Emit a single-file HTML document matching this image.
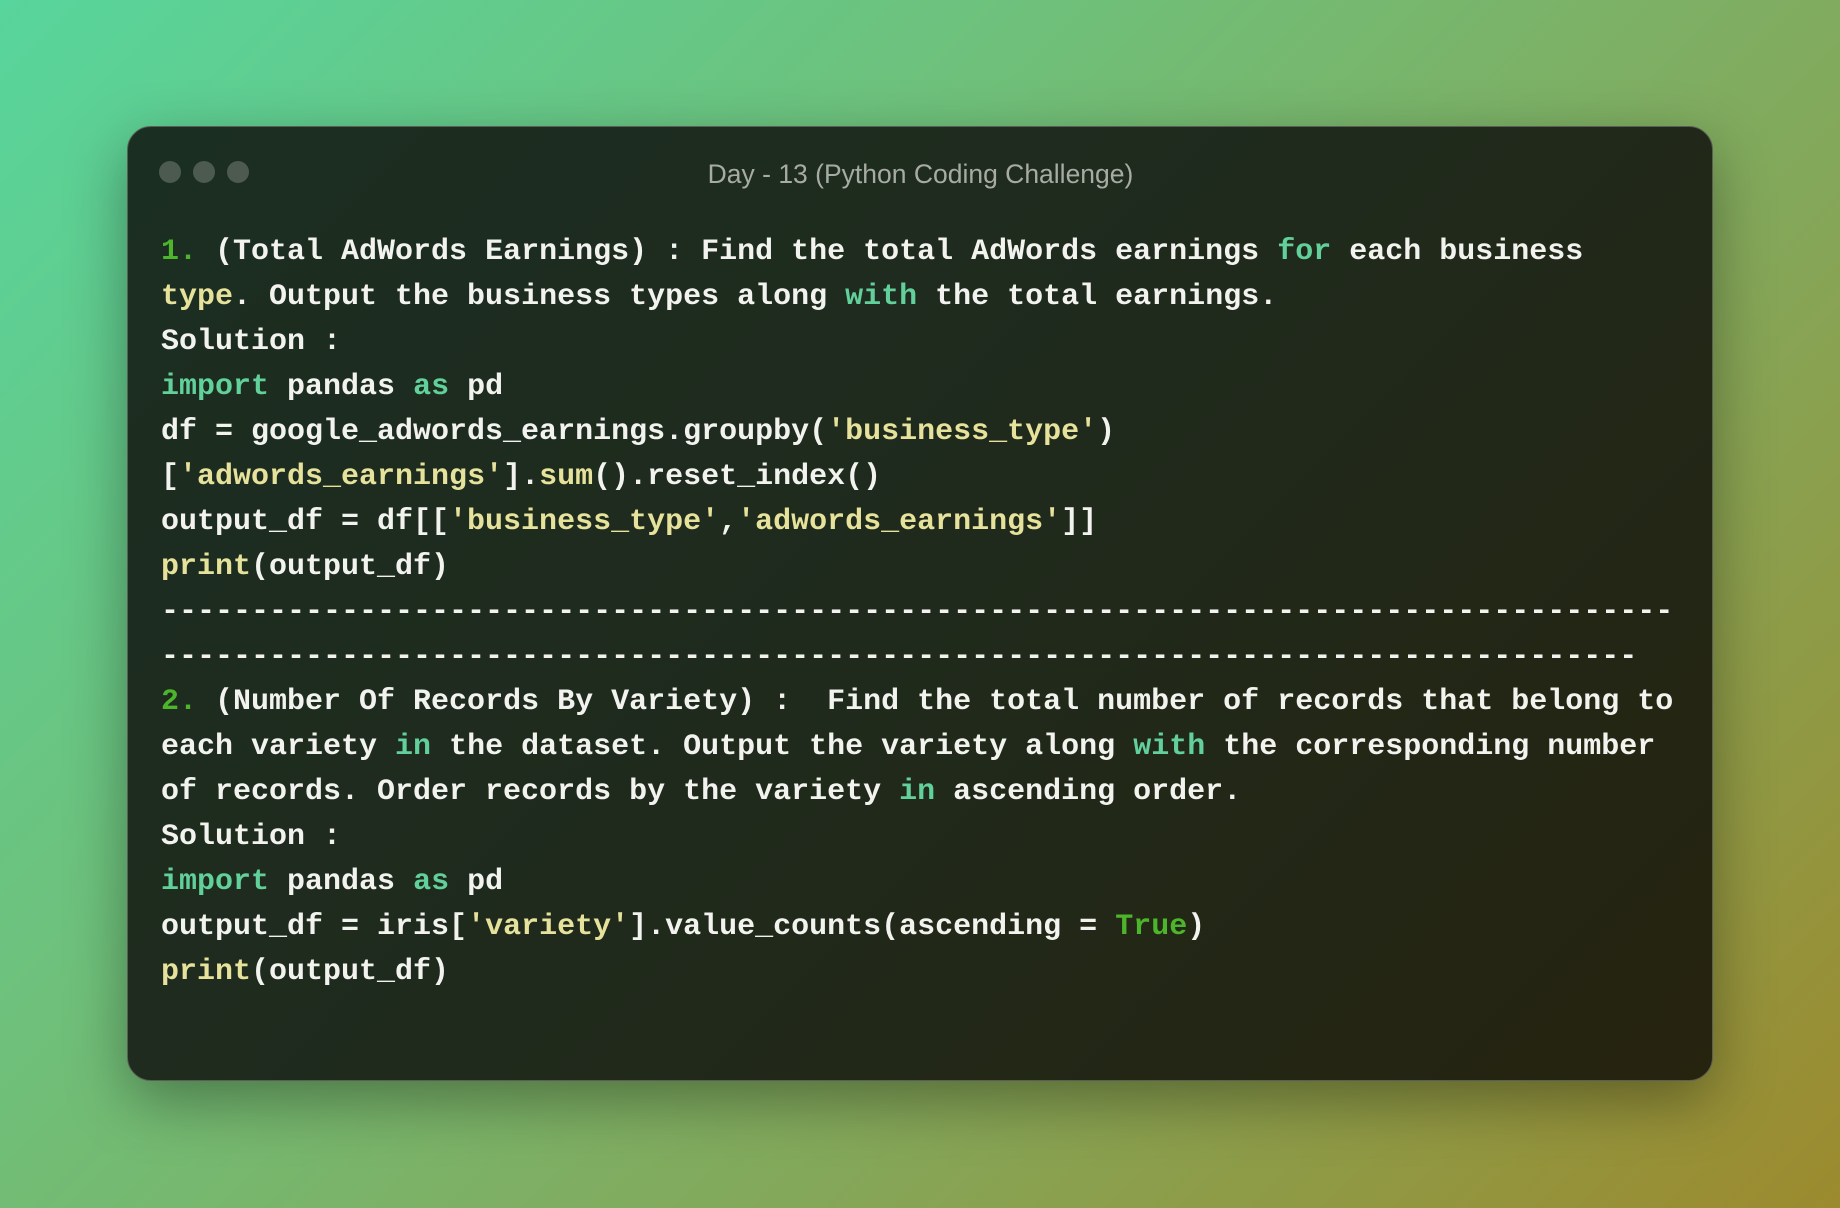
<!DOCTYPE html>
<html><head><meta charset="utf-8"><style>
html,body{margin:0;padding:0}
body{width:1840px;height:1208px;overflow:hidden;position:relative;
background:linear-gradient(135deg,#58d59c 0%,#6fc07a 35%,#84a85a 65%,#9c8a2e 100%);}
.win{position:absolute;left:127px;top:126px;width:1584px;height:953px;border-radius:24px;
background:linear-gradient(135deg,#1b2e22 0%,#1f2a1c 50%,#26230f 100%);
border:1.5px solid #5a5f55;box-shadow:0 20px 60px rgba(0,0,0,0.35);}
.dot{position:absolute;top:161px;width:22px;height:22px;border-radius:50%;background:#4c5a4f}
.title{position:absolute;left:127px;width:1587px;top:159px;text-align:center;font-family:"Liberation Sans",sans-serif;font-size:26.5px;color:#a7aba3;line-height:30px}
pre{position:absolute;left:161px;top:230px;margin:0;font-family:"Liberation Mono",monospace;font-weight:bold;font-size:30px;line-height:45px;color:#f2f2ee;letter-spacing:0}
.k{color:#62d09b}.n{color:#4db52c}.s{color:#e6e29b}
</style></head><body>
<div class="win"></div>
<div class="dot" style="left:159px"></div>
<div class="dot" style="left:193px"></div>
<div class="dot" style="left:227px"></div>
<div class="title">Day - 13 (Python Coding Challenge)</div>
<pre><span class="n">1.</span> (Total AdWords Earnings) : Find the total AdWords earnings <span class="k">for</span> each business
<span class="s">type</span>. Output the business types along <span class="k">with</span> the total earnings.
Solution :
<span class="k">import</span> pandas <span class="k">as</span> pd
df = google_adwords_earnings.groupby(<span class="s">'business_type'</span>)
[<span class="s">'adwords_earnings'</span>].<span class="s">sum</span>().reset_index()
output_df = df[[<span class="s">'business_type'</span>,<span class="s">'adwords_earnings'</span>]]
<span class="s">print</span>(output_df)
------------------------------------------------------------------------------------
----------------------------------------------------------------------------------
<span class="n">2.</span> (Number Of Records By Variety) :  Find the total number of records that belong to
each variety <span class="k">in</span> the dataset. Output the variety along <span class="k">with</span> the corresponding number
of records. Order records by the variety <span class="k">in</span> ascending order.
Solution :
<span class="k">import</span> pandas <span class="k">as</span> pd
output_df = iris[<span class="s">'variety'</span>].value_counts(ascending = <span class="n">True</span>)
<span class="s">print</span>(output_df)</pre>
</body></html>
